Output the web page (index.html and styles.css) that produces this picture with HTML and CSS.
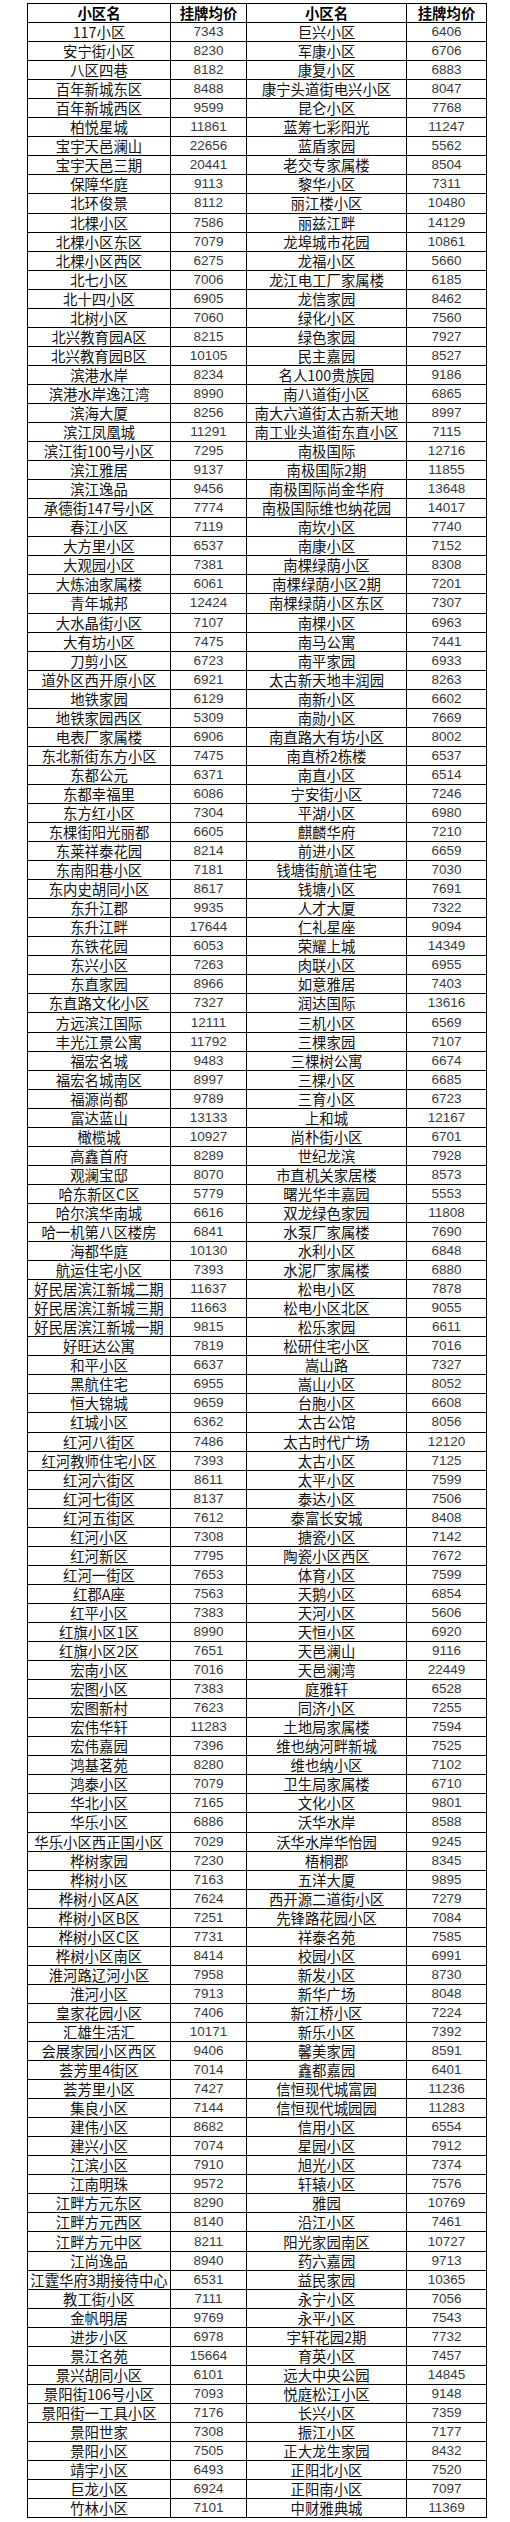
FILE: index.html
```html
<!DOCTYPE html>
<html lang="zh-CN">
<head>
<meta charset="utf-8">
<title>小区挂牌均价</title>
<link rel="stylesheet" href="styles.css">
</head>
<body>
<table class="price-table">
<colgroup>
<col class="c-name1"><col class="c-price1"><col class="c-name2"><col class="c-price2">
</colgroup>
<thead>
<tr><th>小区名</th><th>挂牌均价</th><th>小区名</th><th>挂牌均价</th></tr>
</thead>
<tbody>
<tr><td>117小区</td><td class="num">7343</td><td>巨兴小区</td><td class="num">6406</td></tr>
<tr><td>安宁街小区</td><td class="num">8230</td><td>军康小区</td><td class="num">6706</td></tr>
<tr><td>八区四巷</td><td class="num">8182</td><td>康复小区</td><td class="num">6883</td></tr>
<tr><td>百年新城东区</td><td class="num">8488</td><td>康宁头道街电兴小区</td><td class="num">8047</td></tr>
<tr><td>百年新城西区</td><td class="num">9599</td><td>昆仑小区</td><td class="num">7768</td></tr>
<tr><td>柏悦星城</td><td class="num">11861</td><td>蓝筹七彩阳光</td><td class="num">11247</td></tr>
<tr><td>宝宇天邑澜山</td><td class="num">22656</td><td>蓝盾家园</td><td class="num">5562</td></tr>
<tr><td>宝宇天邑三期</td><td class="num">20441</td><td>老交专家属楼</td><td class="num">8504</td></tr>
<tr><td>保障华庭</td><td class="num">9113</td><td>黎华小区</td><td class="num">7311</td></tr>
<tr><td>北环俊景</td><td class="num">8112</td><td>丽江楼小区</td><td class="num">10480</td></tr>
<tr><td>北棵小区</td><td class="num">7586</td><td>丽兹江畔</td><td class="num">14129</td></tr>
<tr><td>北棵小区东区</td><td class="num">7079</td><td>龙埠城市花园</td><td class="num">10861</td></tr>
<tr><td>北棵小区西区</td><td class="num">6275</td><td>龙福小区</td><td class="num">5660</td></tr>
<tr><td>北七小区</td><td class="num">7006</td><td>龙江电工厂家属楼</td><td class="num">6185</td></tr>
<tr><td>北十四小区</td><td class="num">6905</td><td>龙信家园</td><td class="num">8462</td></tr>
<tr><td>北树小区</td><td class="num">7060</td><td>绿化小区</td><td class="num">7560</td></tr>
<tr><td>北兴教育园A区</td><td class="num">8215</td><td>绿色家园</td><td class="num">7927</td></tr>
<tr><td>北兴教育园B区</td><td class="num">10105</td><td>民主嘉园</td><td class="num">8527</td></tr>
<tr><td>滨港水岸</td><td class="num">8234</td><td>名人100贵族园</td><td class="num">9186</td></tr>
<tr><td>滨港水岸逸江湾</td><td class="num">8990</td><td>南八道街小区</td><td class="num">6865</td></tr>
<tr><td>滨海大厦</td><td class="num">8256</td><td>南大六道街太古新天地</td><td class="num">8997</td></tr>
<tr><td>滨江凤凰城</td><td class="num">11291</td><td>南工业头道街东直小区</td><td class="num">7115</td></tr>
<tr><td>滨江街100号小区</td><td class="num">7295</td><td>南极国际</td><td class="num">12716</td></tr>
<tr><td>滨江雅居</td><td class="num">9137</td><td>南极国际2期</td><td class="num">11855</td></tr>
<tr><td>滨江逸品</td><td class="num">9456</td><td>南极国际尚金华府</td><td class="num">13648</td></tr>
<tr><td>承德街147号小区</td><td class="num">7774</td><td>南极国际维也纳花园</td><td class="num">14017</td></tr>
<tr><td>春江小区</td><td class="num">7119</td><td>南坎小区</td><td class="num">7740</td></tr>
<tr><td>大方里小区</td><td class="num">6537</td><td>南康小区</td><td class="num">7152</td></tr>
<tr><td>大观园小区</td><td class="num">7381</td><td>南棵绿荫小区</td><td class="num">8308</td></tr>
<tr><td>大炼油家属楼</td><td class="num">6061</td><td>南棵绿荫小区2期</td><td class="num">7201</td></tr>
<tr><td>青年城邦</td><td class="num">12424</td><td>南棵绿荫小区东区</td><td class="num">7307</td></tr>
<tr><td>大水晶街小区</td><td class="num">7107</td><td>南棵小区</td><td class="num">6963</td></tr>
<tr><td>大有坊小区</td><td class="num">7475</td><td>南马公寓</td><td class="num">7441</td></tr>
<tr><td>刀剪小区</td><td class="num">6723</td><td>南平家园</td><td class="num">6933</td></tr>
<tr><td>道外区西开原小区</td><td class="num">6921</td><td>太古新天地丰润园</td><td class="num">8263</td></tr>
<tr><td>地铁家园</td><td class="num">6129</td><td>南新小区</td><td class="num">6602</td></tr>
<tr><td>地铁家园西区</td><td class="num">5309</td><td>南勋小区</td><td class="num">7669</td></tr>
<tr><td>电表厂家属楼</td><td class="num">6906</td><td>南直路大有坊小区</td><td class="num">8002</td></tr>
<tr><td>东北新街东方小区</td><td class="num">7475</td><td>南直桥2栋楼</td><td class="num">6537</td></tr>
<tr><td>东都公元</td><td class="num">6371</td><td>南直小区</td><td class="num">6514</td></tr>
<tr><td>东都幸福里</td><td class="num">6086</td><td>宁安街小区</td><td class="num">7246</td></tr>
<tr><td>东方红小区</td><td class="num">7304</td><td>平湖小区</td><td class="num">6980</td></tr>
<tr><td>东棵街阳光丽都</td><td class="num">6605</td><td>麒麟华府</td><td class="num">7210</td></tr>
<tr><td>东莱祥泰花园</td><td class="num">8214</td><td>前进小区</td><td class="num">6659</td></tr>
<tr><td>东南阳巷小区</td><td class="num">7181</td><td>钱塘街航道住宅</td><td class="num">7030</td></tr>
<tr><td>东内史胡同小区</td><td class="num">8617</td><td>钱塘小区</td><td class="num">7691</td></tr>
<tr><td>东升江郡</td><td class="num">9935</td><td>人才大厦</td><td class="num">7322</td></tr>
<tr><td>东升江畔</td><td class="num">17644</td><td>仁礼星座</td><td class="num">9094</td></tr>
<tr><td>东铁花园</td><td class="num">6053</td><td>荣耀上城</td><td class="num">14349</td></tr>
<tr><td>东兴小区</td><td class="num">7263</td><td>肉联小区</td><td class="num">6955</td></tr>
<tr><td>东直家园</td><td class="num">8966</td><td>如意雅居</td><td class="num">7403</td></tr>
<tr><td>东直路文化小区</td><td class="num">7327</td><td>润达国际</td><td class="num">13616</td></tr>
<tr><td>方远滨江国际</td><td class="num">12111</td><td>三机小区</td><td class="num">6569</td></tr>
<tr><td>丰光江景公寓</td><td class="num">11792</td><td>三棵家园</td><td class="num">7107</td></tr>
<tr><td>福宏名城</td><td class="num">9483</td><td>三棵树公寓</td><td class="num">6674</td></tr>
<tr><td>福宏名城南区</td><td class="num">8997</td><td>三棵小区</td><td class="num">6685</td></tr>
<tr><td>福源尚都</td><td class="num">9789</td><td>三育小区</td><td class="num">6723</td></tr>
<tr><td>富达蓝山</td><td class="num">13133</td><td>上和城</td><td class="num">12167</td></tr>
<tr><td>橄榄城</td><td class="num">10927</td><td>尚朴街小区</td><td class="num">6701</td></tr>
<tr><td>高鑫首府</td><td class="num">8289</td><td>世纪龙滨</td><td class="num">7928</td></tr>
<tr><td>观澜宝邸</td><td class="num">8070</td><td>市直机关家居楼</td><td class="num">8573</td></tr>
<tr><td>哈东新区C区</td><td class="num">5779</td><td>曙光华丰嘉园</td><td class="num">5553</td></tr>
<tr><td>哈尔滨华南城</td><td class="num">6616</td><td>双龙绿色家园</td><td class="num">11808</td></tr>
<tr><td>哈一机第八区楼房</td><td class="num">6841</td><td>水泵厂家属楼</td><td class="num">7690</td></tr>
<tr><td>海都华庭</td><td class="num">10130</td><td>水利小区</td><td class="num">6848</td></tr>
<tr><td>航运住宅小区</td><td class="num">7393</td><td>水泥厂家属楼</td><td class="num">6880</td></tr>
<tr><td>好民居滨江新城二期</td><td class="num">11637</td><td>松电小区</td><td class="num">7878</td></tr>
<tr><td>好民居滨江新城三期</td><td class="num">11663</td><td>松电小区北区</td><td class="num">9055</td></tr>
<tr><td>好民居滨江新城一期</td><td class="num">9815</td><td>松乐家园</td><td class="num">6611</td></tr>
<tr><td>好旺达公寓</td><td class="num">7819</td><td>松研住宅小区</td><td class="num">7016</td></tr>
<tr><td>和平小区</td><td class="num">6637</td><td>嵩山路</td><td class="num">7327</td></tr>
<tr><td>黑航住宅</td><td class="num">6955</td><td>嵩山小区</td><td class="num">8052</td></tr>
<tr><td>恒大锦城</td><td class="num">9659</td><td>台胞小区</td><td class="num">6608</td></tr>
<tr><td>红城小区</td><td class="num">6362</td><td>太古公馆</td><td class="num">8056</td></tr>
<tr><td>红河八街区</td><td class="num">7486</td><td>太古时代广场</td><td class="num">12120</td></tr>
<tr><td>红河教师住宅小区</td><td class="num">7393</td><td>太古小区</td><td class="num">7125</td></tr>
<tr><td>红河六街区</td><td class="num">8611</td><td>太平小区</td><td class="num">7599</td></tr>
<tr><td>红河七街区</td><td class="num">8137</td><td>泰达小区</td><td class="num">7506</td></tr>
<tr><td>红河五街区</td><td class="num">7612</td><td>泰富长安城</td><td class="num">8408</td></tr>
<tr><td>红河小区</td><td class="num">7308</td><td>搪瓷小区</td><td class="num">7142</td></tr>
<tr><td>红河新区</td><td class="num">7795</td><td>陶瓷小区西区</td><td class="num">7672</td></tr>
<tr><td>红河一街区</td><td class="num">7653</td><td>体育小区</td><td class="num">7599</td></tr>
<tr><td>红郡A座</td><td class="num">7563</td><td>天鹅小区</td><td class="num">6854</td></tr>
<tr><td>红平小区</td><td class="num">7383</td><td>天河小区</td><td class="num">5606</td></tr>
<tr><td>红旗小区1区</td><td class="num">8990</td><td>天恒小区</td><td class="num">6920</td></tr>
<tr><td>红旗小区2区</td><td class="num">7651</td><td>天邑澜山</td><td class="num">9116</td></tr>
<tr><td>宏南小区</td><td class="num">7016</td><td>天邑澜湾</td><td class="num">22449</td></tr>
<tr><td>宏图小区</td><td class="num">7383</td><td>庭雅轩</td><td class="num">6528</td></tr>
<tr><td>宏图新村</td><td class="num">7623</td><td>同济小区</td><td class="num">7255</td></tr>
<tr><td>宏伟华轩</td><td class="num">11283</td><td>土地局家属楼</td><td class="num">7594</td></tr>
<tr><td>宏伟嘉园</td><td class="num">7396</td><td>维也纳河畔新城</td><td class="num">7525</td></tr>
<tr><td>鸿基茗苑</td><td class="num">8280</td><td>维也纳小区</td><td class="num">7102</td></tr>
<tr><td>鸿泰小区</td><td class="num">7079</td><td>卫生局家属楼</td><td class="num">6710</td></tr>
<tr><td>华北小区</td><td class="num">7165</td><td>文化小区</td><td class="num">9801</td></tr>
<tr><td>华乐小区</td><td class="num">6886</td><td>沃华水岸</td><td class="num">8588</td></tr>
<tr><td>华乐小区西正国小区</td><td class="num">7029</td><td>沃华水岸华怡园</td><td class="num">9245</td></tr>
<tr><td>桦树家园</td><td class="num">7230</td><td>梧桐郡</td><td class="num">8345</td></tr>
<tr><td>桦树小区</td><td class="num">7163</td><td>五洋大厦</td><td class="num">9895</td></tr>
<tr><td>桦树小区A区</td><td class="num">7624</td><td>西开源二道街小区</td><td class="num">7279</td></tr>
<tr><td>桦树小区B区</td><td class="num">7251</td><td>先锋路花园小区</td><td class="num">7084</td></tr>
<tr><td>桦树小区C区</td><td class="num">7731</td><td>祥泰名苑</td><td class="num">7585</td></tr>
<tr><td>桦树小区南区</td><td class="num">8414</td><td>校园小区</td><td class="num">6991</td></tr>
<tr><td>淮河路辽河小区</td><td class="num">7958</td><td>新发小区</td><td class="num">8730</td></tr>
<tr><td>淮河小区</td><td class="num">7913</td><td>新华广场</td><td class="num">8048</td></tr>
<tr><td>皇家花园小区</td><td class="num">7406</td><td>新江桥小区</td><td class="num">7224</td></tr>
<tr><td>汇雄生活汇</td><td class="num">10171</td><td>新乐小区</td><td class="num">7392</td></tr>
<tr><td>会展家园小区西区</td><td class="num">9406</td><td>馨美家园</td><td class="num">8591</td></tr>
<tr><td>荟芳里4街区</td><td class="num">7014</td><td>鑫都嘉园</td><td class="num">6401</td></tr>
<tr><td>荟芳里小区</td><td class="num">7427</td><td>信恒现代城富园</td><td class="num">11236</td></tr>
<tr><td>集良小区</td><td class="num">7144</td><td>信恒现代城园园</td><td class="num">11283</td></tr>
<tr><td>建伟小区</td><td class="num">8682</td><td>信用小区</td><td class="num">6554</td></tr>
<tr><td>建兴小区</td><td class="num">7074</td><td>星园小区</td><td class="num">7912</td></tr>
<tr><td>江滨小区</td><td class="num">7910</td><td>旭光小区</td><td class="num">7374</td></tr>
<tr><td>江南明珠</td><td class="num">9572</td><td>轩辕小区</td><td class="num">7576</td></tr>
<tr><td>江畔方元东区</td><td class="num">8290</td><td>雅园</td><td class="num">10769</td></tr>
<tr><td>江畔方元西区</td><td class="num">8140</td><td>沿江小区</td><td class="num">7461</td></tr>
<tr><td>江畔方元中区</td><td class="num">8211</td><td>阳光家园南区</td><td class="num">10727</td></tr>
<tr><td>江尚逸品</td><td class="num">8940</td><td>药六嘉园</td><td class="num">9713</td></tr>
<tr><td>江霆华府3期接待中心</td><td class="num">6531</td><td>益民家园</td><td class="num">10365</td></tr>
<tr><td>教工街小区</td><td class="num">7111</td><td>永宁小区</td><td class="num">7056</td></tr>
<tr><td>金帆明居</td><td class="num">9769</td><td>永平小区</td><td class="num">7543</td></tr>
<tr><td>进步小区</td><td class="num">6978</td><td>宇轩花园2期</td><td class="num">7732</td></tr>
<tr><td>景江名苑</td><td class="num">15664</td><td>育英小区</td><td class="num">7457</td></tr>
<tr><td>景兴胡同小区</td><td class="num">6101</td><td>远大中央公园</td><td class="num">14845</td></tr>
<tr><td>景阳街106号小区</td><td class="num">7093</td><td>悦庭松江小区</td><td class="num">9148</td></tr>
<tr><td>景阳街一工具小区</td><td class="num">7176</td><td>长兴小区</td><td class="num">7359</td></tr>
<tr><td>景阳世家</td><td class="num">7308</td><td>振江小区</td><td class="num">7177</td></tr>
<tr><td>景阳小区</td><td class="num">7505</td><td>正大龙生家园</td><td class="num">8432</td></tr>
<tr><td>靖宇小区</td><td class="num">6493</td><td>正阳北小区</td><td class="num">7520</td></tr>
<tr><td>巨龙小区</td><td class="num">6924</td><td>正阳南小区</td><td class="num">7097</td></tr>
<tr><td>竹林小区</td><td class="num">7101</td><td>中财雅典城</td><td class="num">11369</td></tr>
</tbody>
</table>
</body>
</html>
```

FILE: styles.css
```css
html, body {
  margin: 0;
  padding: 0;
  background: #ffffff;
}

body {
  padding: 3px 0 0 27px;
  font-family: "Noto Sans CJK SC", "Noto Sans", sans-serif;
  color: #111111;
}

.price-table {
  border-collapse: collapse;
  table-layout: fixed;
  width: 459px;
  font-size: 14.4px;
  line-height: 18px;
}

.c-name1 { width: 143px; }
.c-price1 { width: 76px; }
.c-name2 { width: 160px; }
.c-price2 { width: 80px; }

.price-table th,
.price-table td {
  border: 1px solid #000000;
  height: 18.05px;
  padding: 0;
  text-align: center;
  vertical-align: middle;
  white-space: nowrap;
  overflow: hidden;
}

.price-table th {
  font-weight: 700;
  color: #000000;
}

.price-table td {
  font-weight: 400;
}

.price-table td.num {
  font-family: "Liberation Sans", "DejaVu Sans", sans-serif;
  font-size: 13.5px;
  color: #3a3a3a;
}
```
